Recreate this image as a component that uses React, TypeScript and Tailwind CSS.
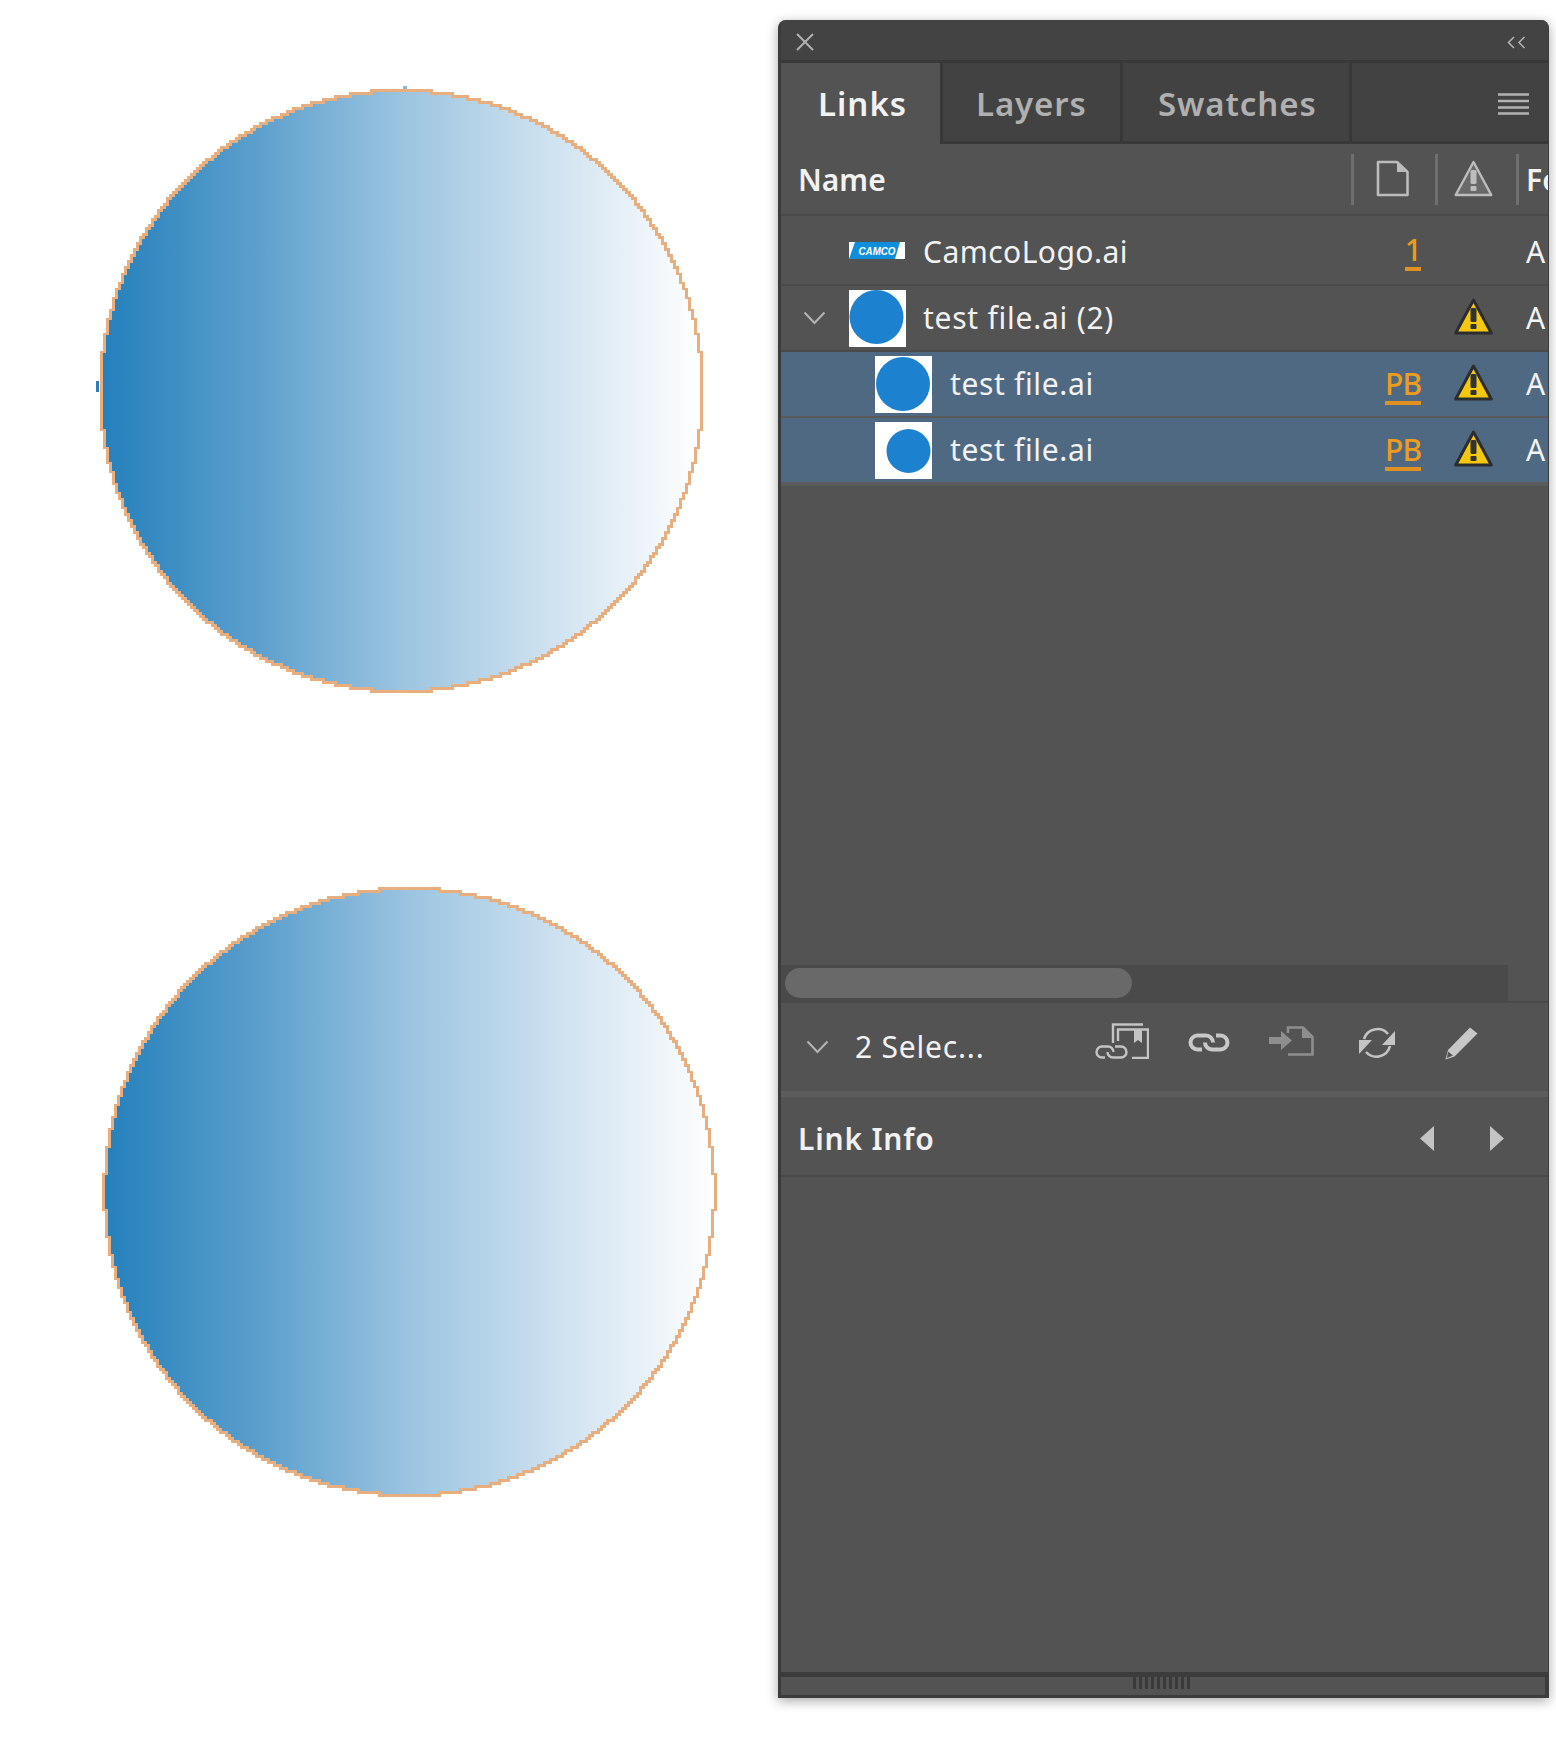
import React from "react";

function steppedPath(w: number, h: number, step: number) {
  const cx = w / 2;
  const cy = h / 2;
  const rx = w / 2 - 1.5;
  const ry = h / 2 - 1.5;
  const n = Math.round((2 * ry) / step);
  const s = (2 * ry) / n;
  const right: string[] = [];
  const left: string[] = [];
  for (let i = 0; i < n; i++) {
    const yTop = 1.5 + i * s;
    const yBot = yTop + s;
    const yc = (yTop + yBot) / 2;
    const half = rx * Math.sqrt(Math.max(0, 1 - ((yc - cy) / ry) ** 2));
    const x = Math.round(half / step) * step;
    right.push(`${cx + x} ${yTop}`, `${cx + x} ${yBot}`);
    left.unshift(`${cx - x} ${yBot}`, `${cx - x} ${yTop}`);
  }
  return "M" + [...right, ...left].join("L") + "Z";
}

function Disc({ id, w, h, className, children }: { id: string; w: number; h: number; className: string; children?: React.ReactNode }) {
  return (
    <svg width={w} height={h} className={className} overflow="visible" shapeRendering="crispEdges">
      <defs>
        <linearGradient id={id} x1="0" x2="1" y1="0" y2="0">
          <stop offset="0" stopColor="#2480bc" />
          <stop offset="0.25" stopColor="#5a9ecc" />
          <stop offset="0.5" stopColor="#9bc4e0" />
          <stop offset="0.75" stopColor="#cfe2f0" />
          <stop offset="1" stopColor="#ffffff" />
        </linearGradient>
      </defs>
      <path d={steppedPath(w, h, 3)} fill={`url(#${id})`} stroke="#e9ae7d" strokeWidth="2.6" />
      {children}
    </svg>
  );
}

function Warn({ kind = "color" }: { kind?: "color" | "mute" }) {
  const mute = kind === "mute";
  const mark = mute ? "#bdbdbd" : "#2f3236";
  return (
    <svg width="39" height="37" viewBox="0 0 39 37" className="shrink-0 block">
      <path d="M19.5 2 L37.3 35 H1.7 Z" fill={mute ? "#696969" : "#f5c80f"} stroke={mute ? "#bdbdbd" : "#2b2d30"} strokeWidth={mute ? 2.4 : 3} strokeLinejoin="round" />
      <rect x="16.5" y="10" width="6" height="14" rx="1.5" fill={mark} />
      <rect x="16.5" y="26" width="6" height="5" rx="1" fill={mark} />
    </svg>
  );
}

function Thumb({ circle }: { circle: "big" | "big2" | "small" }) {
  return (
    <svg width="57" height="57" viewBox="0 0 57 57" className="shrink-0 block bg-white">
      {circle === "big" && <circle cx="27.5" cy="27" r="27" fill="#1c82cf" />}
      {circle === "big2" && <circle cx="28" cy="28" r="27" fill="#1c82cf" />}
      {circle === "small" && <circle cx="33.5" cy="29" r="22" fill="#1c82cf" />}
    </svg>
  );
}

function Chevron() {
  return (
    <svg width="23" height="14" viewBox="0 0 23 14" className="shrink-0 block">
      <path d="M1.5 1.5 L11.5 12 L21.5 1.5" fill="none" stroke="#b4b4b4" strokeWidth="2" />
    </svg>
  );
}

function Status({ text }: { text: string }) {
  return (
    <div className="w-[80px] shrink-0 flex justify-end">
      <span className="block h-[38px] mt-[3px] leading-[34px] tracking-[-1px] font-medium text-[#ee9c1b] border-b-[4px] border-[#e0911f]">{text}</span>
    </div>
  );
}

function Row({ h, selected, children, status, warn }: { h: string; selected?: boolean; children: React.ReactNode; status?: string; warn?: boolean }) {
  return (
    <div className={`${h} ${selected ? "bg-[#4f6982]" : ""} flex items-center shrink-0 overflow-hidden`}>
      <div className="w-[560px] shrink-0 flex items-center">{children}</div>
      {status ? <Status text={status} /> : <div className="w-[80px] shrink-0" />}
      <div className="w-[39px] ml-[33px] shrink-0 mb-[4px]">{warn && <Warn />}</div>
      <span className={`ml-[33px] shrink-0 text-[#f4f4f4] ${warn ? "-mt-[2px]" : "mt-[2px]"}`}>A</span>
    </div>
  );
}

function Logo() {
  return (
    <svg width="56" height="17" viewBox="0 0 56 17" className="shrink-0 block bg-white">
      <path d="M6 0 H51 L46 17 H0 Z" fill="#0f8edb" />
      <text x="9.5" y="12.5" textLength={37} lengthAdjust="spacingAndGlyphs" fontFamily="Liberation Sans" fontWeight="700" fontStyle="italic" fontSize="11.5" fill="#ffffff">CAMCO</text>
    </svg>
  );
}

export default function App() {
  return (
    <div className="w-[1556px] h-[1738px] bg-white flex overflow-hidden font-['Noto_Sans',sans-serif] text-[30px] text-[#f2f2f2]">
      <div className="w-[778px] shrink-0 flex flex-col items-start">
        <Disc id="g1" w={605} h={604} className="ml-[99px] mt-[89px] block">
          <rect x="-3" y="292" width="3" height="11" fill="#2d7fb6" />
          <rect x="304" y="-3" width="4" height="3" fill="#8fb8d8" />
        </Disc>
        <Disc id="g2" w={613} h={610} className="ml-[103px] mt-[194px] block" />
      </div>

      <div className="w-[771px] h-[1678px] mt-[20px] shrink-0 flex flex-col bg-[#535353] rounded-t-[8px] border-l-[3px] border-r-[1px] border-b-[3px] border-[#3c3c3c] overflow-hidden shadow-[0_3px_12px_rgba(0,0,0,0.35)]">
        {/* title bar */}
        <div className="h-[43px] shrink-0 bg-[#434343] border-b-[3px] border-[#383838] flex items-center justify-between pl-[15px] pr-[21px] pt-[4px]">
          <svg width="18" height="18" viewBox="0 0 18 18" className="block">
            <path d="M1 1 L17 17 M17 1 L1 17" stroke="#b2b2b2" strokeWidth="2" fill="none" />
          </svg>
          <svg width="20" height="13" viewBox="0 0 20 13" className="block">
            <path d="M7 1 L1.5 6.5 L7 12 M17.5 1 L12 6.5 L17.5 12" stroke="#b2b2b2" strokeWidth="1.6" fill="none" />
          </svg>
        </div>

        {/* tabs */}
        <div className="h-[81px] shrink-0 flex bg-[#424242] font-semibold text-[33px] leading-[44px]">
          <div className="w-[162px] shrink-0 bg-[#535353] pl-[37px] pt-[19px] border-r-[3px] border-[#383838] text-[#f2f2f2]">
            <span className="tracking-[1px]">Links</span>
          </div>
          <div className="w-[180px] shrink-0 pl-[33px] pt-[19px] border-r-[3px] border-b-[3px] border-[#383838] text-[#b0b0b0]">
            <span className="tracking-[0.9px]">Layers</span>
          </div>
          <div className="w-[229px] shrink-0 pl-[35px] pt-[19px] border-r-[3px] border-b-[3px] border-[#383838] text-[#b0b0b0]">
            <span className="tracking-[0.9px]">Swatches</span>
          </div>
          <div className="flex-1 border-b-[3px] border-[#383838] flex items-start justify-end pr-[19px] pt-[30px]">
            <svg width="31" height="22" viewBox="0 0 31 22" className="block">
              <path d="M0 1.5 H31 M0 8 H31 M0 14.5 H31 M0 20.5 H31" stroke="#b2b2b2" strokeWidth="2.4" />
            </svg>
          </div>
        </div>

        {/* column header */}
        <div className="h-[72px] shrink-0 flex items-center border-b-[2px] border-[#4a4a4a] overflow-hidden font-semibold">
          <div className="w-[570px] pl-[17px] shrink-0">Name</div>
          <div className="w-[3px] h-[51px] bg-[#6f6f6f] shrink-0" />
          <svg width="33" height="37" viewBox="0 0 33 37" className="ml-[22px] mb-[2px] shrink-0 block">
            <path d="M2 2 H21 L31.5 12 V35 H2 Z" fill="none" stroke="#bcbcbc" strokeWidth="2.6" strokeLinejoin="round" />
            <path d="M21 2 V12 H31.5 Z" fill="#bcbcbc" />
          </svg>
          <div className="w-[3px] h-[51px] bg-[#6f6f6f] ml-[26px] shrink-0" />
          <div className="ml-[16px] mb-[2px] shrink-0"><Warn kind="mute" /></div>
          <div className="w-[3px] h-[51px] bg-[#6f6f6f] ml-[23px] shrink-0" />
          <span className="ml-[7px] shrink-0">Fo</span>
        </div>

        {/* list */}
        <Row h="h-[70px] border-b-[2px] border-[#4a4a4a]" status="1">
          <div className="ml-[68px]"><Logo /></div>
          <span className="ml-[18px] mt-[2px] tracking-[0.45px]">CamcoLogo.ai</span>
        </Row>
        <Row h="h-[66px] border-b-[2px] border-[#4a4a4a]" warn>
          <div className="ml-[22px]"><Chevron /></div>
          <div className="ml-[23px]"><Thumb circle="big" /></div>
          <span className="ml-[17px] -mt-[2px] tracking-[0.75px]">test file.ai (2)</span>
        </Row>
        <Row h="h-[66px] border-b-[2px] border-[#5a5a5a]" selected status="PB" warn>
          <div className="ml-[94px]"><Thumb circle="big2" /></div>
          <span className="ml-[18px] -mt-[2px] tracking-[0.65px]">test file.ai</span>
        </Row>
        <Row h="h-[64px]" selected status="PB" warn>
          <div className="ml-[94px]"><Thumb circle="small" /></div>
          <span className="ml-[18px] -mt-[2px] tracking-[0.65px]">test file.ai</span>
        </Row>
        <div className="h-[4px] shrink-0 bg-[#5c5c5c]" />
        <div className="h-[479px] shrink-0" />

        {/* scrollbar */}
        <div className="h-[38px] shrink-0 border-b-[2px] border-[#4a4a4a]">
          <div className="h-[36px] w-[727px] bg-[#4a4a4a] pl-[4px] pt-[3px]">
            <div className="h-[30px] w-[347px] rounded-full bg-[#696969]" />
          </div>
        </div>

        {/* toolbar */}
        <div className="h-[88px] shrink-0 flex items-center">
          <div className="ml-[25px] shrink-0"><Chevron /></div>
          <span className="ml-[26px] w-[240px] shrink-0 -mt-[2px] whitespace-nowrap tracking-[0.8px]">2 Selec...</span>
          <div className="flex items-start h-[37px] mb-[12px]">
            <svg width="54" height="36" viewBox="0 0 54 36" className="block shrink-0">
              <g fill="none" stroke="#c4c4c4" strokeWidth="2.4">
                <path d="M18 20 V1.5 H48" />
                <path d="M23 18 V6.5 H53 V35 H37" />
                <path d="M10 34.5 H7 a5.5 5.5 0 0 1 0-11 H13 a5.5 5.5 0 0 1 5.5 5.5" />
                <path d="M20 23.5 h6 a5.5 5.5 0 0 1 0 11 H18 a5.5 5.5 0 0 1-5.5-5.5" />
              </g>
              <path d="M39 6 H47 V20 L43 17 L39 20 Z" fill="#c4c4c4" />
            </svg>
            <svg width="42" height="19" viewBox="0 0 42 19" className="block shrink-0 ml-[39px] mt-[10px]">
              <g fill="none" stroke="#c8c8c8" strokeWidth="4">
                <path d="M14 16.5 H9.5 a7 7 0 0 1 0-14 H18 a7 7 0 0 1 7 7" />
                <path d="M28 2.5 H32.5 a7 7 0 0 1 0 14 H24 a7 7 0 0 1-7-7" />
              </g>
            </svg>
            <svg width="45" height="30" viewBox="0 0 45 30" className="block shrink-0 ml-[39px] mt-[3px]">
              <path d="M19 7 V1.5 H34 L43.5 11 V28.5 H19" fill="none" stroke="#8e8e8e" strokeWidth="2.6" />
              <path d="M33 1.5 V12 H43.5 Z" fill="#8e8e8e" />
              <path d="M0 11 H12 V5 L23 14.5 L12 24 V18 H0 Z" fill="#8e8e8e" />
            </svg>
            <svg width="36" height="33" viewBox="0 0 36 33" className="block shrink-0 ml-[45px] mt-[3px]">
              <path d="M5 13 A14 14 0 0 1 29 8" fill="none" stroke="#c4c4c4" strokeWidth="2.6" />
              <path d="M31 20 A14 14 0 0 1 7 26" fill="none" stroke="#c4c4c4" strokeWidth="2.6" />
              <path d="M36 5 V19 H23 Z M0 14 V28 L13 14 Z" fill="#c4c4c4" />
            </svg>
            <svg width="33" height="33" viewBox="0 0 33 33" className="block shrink-0 ml-[50px] mt-[4px]">
              <path d="M0.5 32.5 L3 23 L25 0.5 L32.5 6.5 L9.5 29.5 Z" fill="#c8c8c8" />
              <path d="M3 24.5 L8 28.5 L2 31 Z" fill="#535353" />
            </svg>
          </div>
        </div>
        <div className="h-[6px] shrink-0 bg-[#5c5c5c]" />

        {/* link info */}
        <div className="h-[80px] shrink-0 flex items-center border-b-[2px] border-[#4a4a4a] font-semibold pt-[4px]">
          <span className="ml-[17px] w-[622px] shrink-0 tracking-[0.8px]">Link Info</span>
          <svg width="14" height="25" viewBox="0 0 14 25" className="block shrink-0">
            <path d="M14 0 V25 L0 12.5 Z" fill="#c4c4c4" />
          </svg>
          <svg width="14" height="25" viewBox="0 0 14 25" className="block shrink-0 ml-[56px]">
            <path d="M0 0 V25 L14 12.5 Z" fill="#c4c4c4" />
          </svg>
        </div>
        <div className="flex-1 min-h-0" />

        {/* bottom grip */}
        <div className="h-[5px] shrink-0 bg-[#3c3c3c]" />
        <div className="h-[18px] shrink-0 flex justify-center gap-[3px] pr-[3px] border-r-[3px] border-[#3c3c3c]">
          {[0, 1, 2, 3, 4, 5, 6, 7, 8, 9].map((i) => (
            <div key={i} className="w-[3px] h-[12px] bg-[#3a3a3a]" />
          ))}
        </div>
      </div>
    </div>
  );
}
